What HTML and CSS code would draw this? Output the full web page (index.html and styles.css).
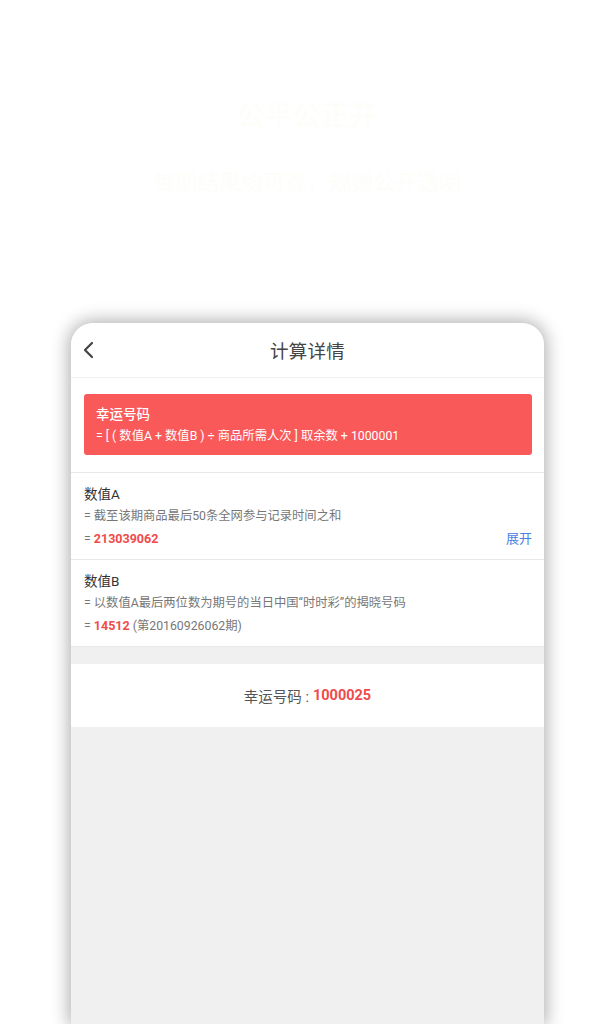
FILE: index.html
```html
<!DOCTYPE html>
<html lang="zh-CN">
<head>
<meta charset="utf-8">
<title>计算详情</title>
<link rel="stylesheet" href="styles.css">
</head>
<body>
<div class="page">
  <div class="hero">
    <div class="hero-title">公平公正开</div>
    <div class="hero-sub">每期结果均可查，规则公开透明</div>
  </div>
  <div class="phone">
    <div class="header">
      <svg class="back" width="14" height="20" viewBox="0 0 14 20"><polyline points="10,3 3,10 10,17" fill="none" stroke="#444" stroke-width="2.2" stroke-linecap="round" stroke-linejoin="round"/></svg>
      <div class="title">计算详情</div>
    </div>
    <div class="formula-wrap">
      <div class="formula">
        <div class="formula-title">幸运号码</div>
        <div class="formula-text">= [ ( 数值A + 数值B ) ÷ 商品所需人次 ] 取余数 + 1000001</div>
      </div>
    </div>
    <div class="section">
      <div class="sec-title">数值A</div>
      <div class="sec-line">= 截至该期商品最后50条全网参与记录时间之和</div>
      <div class="sec-line row"><span>= <b class="red">213039062</b></span><span class="expand">展开</span></div>
    </div>
    <div class="section">
      <div class="sec-title">数值B</div>
      <div class="sec-line">= 以数值A最后两位数为期号的当日中国“时时彩”的揭晓号码</div>
      <div class="sec-line">= <b class="red">14512</b> (第20160926062期)</div>
    </div>
    <div class="result">幸运号码 : <b class="red">1000025</b></div>
  </div>
</div>
</body>
</html>
```

FILE: styles.css
```css
html, body {
  margin: 0;
  padding: 0;
  background: #ffffff;
}
body {
  width: 614px;
  height: 1024px;
  overflow: hidden;
  font-family: Roboto, "Noto Sans CJK SC", sans-serif;
}
.page {
  display: flex;
  flex-direction: column;
  height: 1024px;
}
.hero {
  height: 323px;
  display: flex;
  flex-direction: column;
  align-items: center;
  box-sizing: border-box;
  padding-top: 98px;
  color: #fdfefa;
}
.hero-title {
  font-size: 28px;
  line-height: 38px;
  font-weight: 500;
}
.hero-sub {
  margin-top: 32px;
  font-size: 22px;
  line-height: 30px;
}
.phone {
  margin-left: 71px;
  width: 473px;
  flex: 1;
  background: #f0f0f0;
  border-radius: 22px 22px 0 0;
  box-shadow: 0 0 18px 2px rgba(0, 0, 0, 0.33);
  overflow: hidden;
}
.header {
  height: 54px;
  background: #fff;
  border-bottom: 1px solid #f0f0f0;
  display: flex;
  align-items: center;
  justify-content: center;
  position: relative;
}
.back {
  position: absolute;
  left: 11px;
  top: 17px;
}
.title {
  font-size: 18.5px;
  color: #444;
  letter-spacing: 0.3px;
}
.formula-wrap {
  background: #fff;
  padding: 16px 12px 17px 13px;
  border-bottom: 1px solid #e8e8e8;
}
.formula {
  background: #f95959;
  border-radius: 3px;
  height: 61px;
  box-sizing: border-box;
  padding: 9px 12px 0;
  color: #fff;
}
.formula-title {
  font-size: 13.5px;
  line-height: 22px;
  font-weight: 500;
}
.formula-text {
  font-size: 12.3px;
  line-height: 22px;
}
.section {
  background: #fff;
  padding: 9px 12px 9px 13px;
  border-bottom: 1px solid #e8e8e8;
}
.section:last-of-type {
  border-bottom: none;
}
.sec-title {
  font-size: 13.5px;
  line-height: 24px;
  color: #333;
}
.sec-line {
  font-size: 12.3px;
  line-height: 21.5px;
  color: #777;
}
.row {
  display: flex;
  justify-content: space-between;
  align-items: center;
}
.red {
  color: #f04b4b;
  font-weight: bold;
  font-size: 12.5px;
}
.expand {
  color: #4a80e6;
  font-size: 13px;
}
.result {
  margin-top: 17px;
  height: 63px;
  background: #fff;
  display: flex;
  align-items: center;
  justify-content: center;
  font-size: 14.5px;
  color: #555;
  box-sizing: border-box;
}
.result .red {
  font-size: 14.5px;
  margin-left: 4px;
}
```
